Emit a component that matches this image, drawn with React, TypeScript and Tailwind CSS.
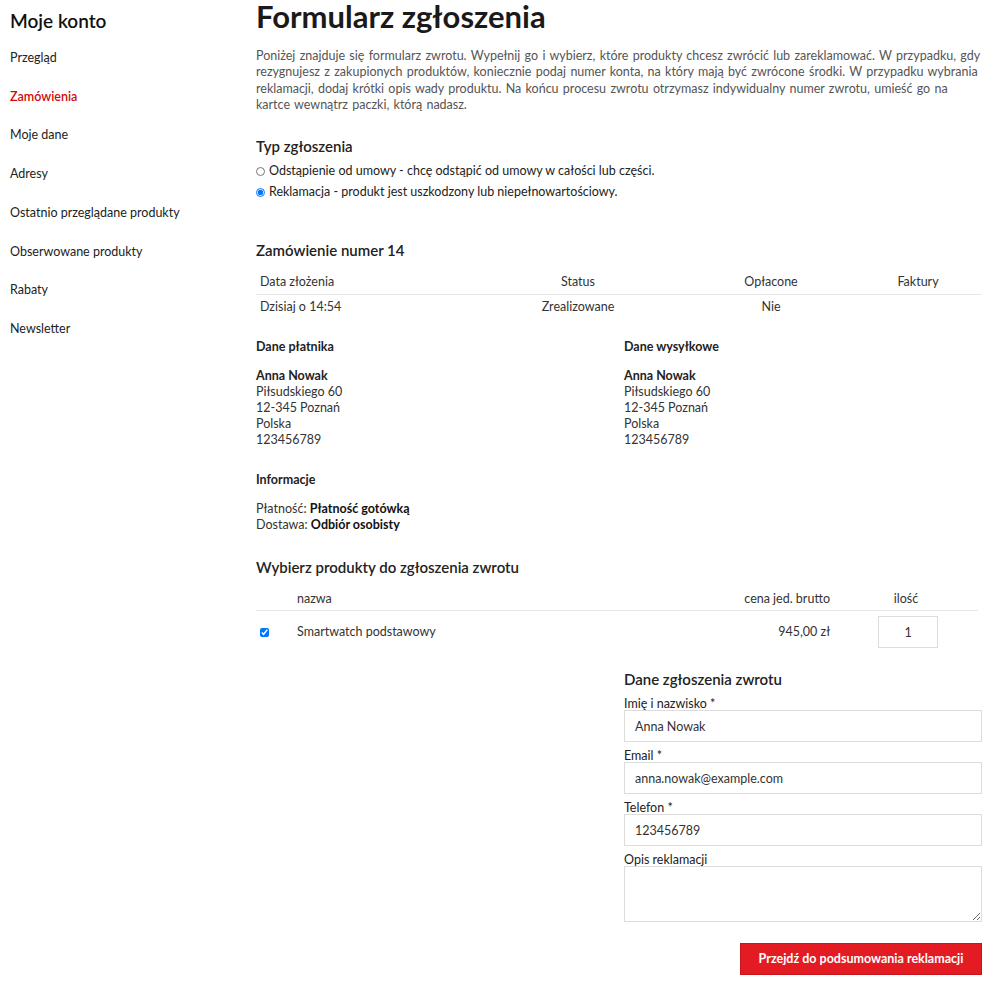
const menu = [
  'Przegląd',
  'Zamówienia',
  'Moje dane',
  'Adresy',
  'Ostatnio przeglądane produkty',
  'Obserwowane produkty',
  'Rabaty',
  'Newsletter',
];

const address = ['Piłsudskiego 60', '12-345 Poznań', 'Polska', '123456789'];

const Field = ({ label, value, className }: { label: string; value: string; className?: string }) => (
  <div className={className}>
    <div className="h-[16px] text-[12.5px] leading-[20px] text-[#222]">{label}</div>
    <input
      readOnly
      value={value}
      className="block w-full h-[32px] border border-[#ddd] px-[10px] text-[12.5px] text-[#333] outline-none"
    />
  </div>
);

export default function App() {
  return (
    <div className="flex w-[1000px] bg-white font-[Lato,sans-serif] text-[#222]">
      {/* Sidebar */}
      <aside className="w-[256px] shrink-0 pl-[10px]">
        <h2 className="mt-[7px] text-[19px] leading-[28px] font-semibold text-[#111]">Moje konto</h2>
        <ul className="mt-[4px]">
          {menu.map((item) => (
            <li
              key={item}
              className={`py-[11px] text-[12.5px] leading-[16.7px] ${item === 'Zamówienia' ? 'text-[#d10a0a] font-semibold' : 'text-[#222]'}`}
            >
              {item}
            </li>
          ))}
        </ul>
      </aside>

      {/* Main */}
      <main className="w-[726px] shrink-0">
        <h1 className="-mt-[4px] text-[31px] leading-[40px] font-bold text-[#1a1a1a]">Formularz zgłoszenia</h1>
        <p className="mt-[12px] text-[12.5px] leading-[16.3px] text-[#555] [word-spacing:1.1px]">
          Poniżej znajduje się formularz zwrotu. Wypełnij go i wybierz, które produkty chcesz zwrócić lub zareklamować. W
          przypadku, gdy rezygnujesz z zakupionych produktów, koniecznie podaj numer konta, na który mają być zwrócone
          środki. W przypadku wybrania reklamacji, dodaj krótki opis wady produktu. Na końcu procesu zwrotu otrzymasz
          indywidualny numer zwrotu, umieść go na kartce wewnątrz paczki, którą nadasz.
        </p>

        <h3 className="mt-[23px] text-[15px] leading-[20px] font-semibold">Typ zgłoszenia</h3>
        <div className="mt-[5px] text-[12.5px]">
          <label className="flex items-center h-[21px]">
            <input type="radio" name="typ" className="m-0 mr-[4px] w-[9px] h-[9px]" />
            Odstąpienie od umowy - chcę odstąpić od umowy w całości lub części.
          </label>
          <label className="flex items-center h-[21px]">
            <input type="radio" name="typ" defaultChecked className="m-0 mr-[4px] w-[9px] h-[9px]" />
            Reklamacja - produkt jest uszkodzony lub niepełnowartościowy.
          </label>
        </div>

        <h3 className="mt-[37px] text-[15px] leading-[20px] font-semibold">Zamówienie numer 14</h3>
        <div className="mt-[11px] text-[12.5px]">
          <div className="grid grid-cols-[212px_220px_166px_128px] h-[24px] items-center border-b border-[#e8e8e8] text-[#333]">
            <div className="pl-[4px]">Data złożenia</div>
            <div className="text-center">Status</div>
            <div className="text-center">Opłacone</div>
            <div className="text-center">Faktury</div>
          </div>
          <div className="grid grid-cols-[212px_220px_166px_128px] h-[25px] items-center text-[#333]">
            <div className="pl-[4px]">Dzisiaj o 14:54</div>
            <div className="text-center">Zrealizowane</div>
            <div className="text-center">Nie</div>
            <div />
          </div>
        </div>

        <div className="mt-[19px] grid grid-cols-2 gap-x-[10px] text-[12.5px] leading-[16px]">
          {['Dane płatnika', 'Dane wysyłkowe'].map((title) => (
            <div key={title}>
              <div className="font-bold">{title}</div>
              <div className="mt-[13px] font-bold">Anna Nowak</div>
              {address.map((line) => (
                <div key={line} className="text-[#333]">
                  {line}
                </div>
              ))}
            </div>
          ))}
        </div>

        <div className="mt-[24px] text-[12.5px] leading-[16px]">
          <div className="font-bold">Informacje</div>
          <div className="mt-[13px] text-[#333]">
            Płatność: <b className="text-[#111]">Płatność gotówką</b>
          </div>
          <div className="text-[#333]">
            Dostawa: <b className="text-[#111]">Odbiór osobisty</b>
          </div>
        </div>

        <h3 className="mt-[24px] text-[15px] leading-[20px] font-semibold">Wybierz produkty do zgłoszenia zwrotu</h3>
        <div className="mt-[12px] text-[12.5px] text-[#333]">
          <div className="grid grid-cols-[41px_1fr_160px_144px] mr-[4px] h-[22px] items-center border-b border-[#e8e8e8]">
            <div />
            <div>nazwa</div>
            <div className="text-right pr-[4px]">cena jed. brutto</div>
            <div className="text-center">ilość</div>
          </div>
          <div className="grid grid-cols-[41px_1fr_160px_144px] mr-[4px] h-[42px] items-center">
            <div className="pl-[4px] flex items-center">
              <input type="checkbox" defaultChecked className="m-0 w-[9px] h-[9px]" />
            </div>
            <div>Smartwatch podstawowy</div>
            <div className="text-right pr-[4px]">945,00 zł</div>
            <div className="flex justify-center">
              <input
                readOnly
                value="1"
                className="ml-[4px] w-[60px] h-[32px] border border-[#ddd] text-center text-[12.5px] outline-none"
              />
            </div>
          </div>
        </div>

        <div className="grid grid-cols-2 gap-x-[10px]">
          <div />
          <div>
            <h3 className="mt-[16px] text-[15px] leading-[20px] font-semibold">Dane zgłoszenia zwrotu</h3>
            <Field label="Imię i nazwisko *" value="Anna Nowak" className="mt-[5px]" />
            <Field label="Email *" value="anna.nowak@example.com" className="mt-[4px]" />
            <Field label="Telefon *" value="123456789" className="mt-[4px]" />
            <div className="mt-[4px]">
              <div className="h-[16px] text-[12.5px] leading-[20px]">Opis reklamacji</div>
              <textarea className="block w-full h-[56px] border border-[#ddd] px-[10px] py-[6px] text-[12.5px] outline-none" />
            </div>
            <div className="flex justify-end mt-[21px]">
              <button className="w-[242px] h-[32px] bg-[#e31b23] text-white text-[12.5px] font-bold border border-[#c9151c]">
                Przejdź do podsumowania reklamacji
              </button>
            </div>
          </div>
        </div>
      </main>
    </div>
  );
}
